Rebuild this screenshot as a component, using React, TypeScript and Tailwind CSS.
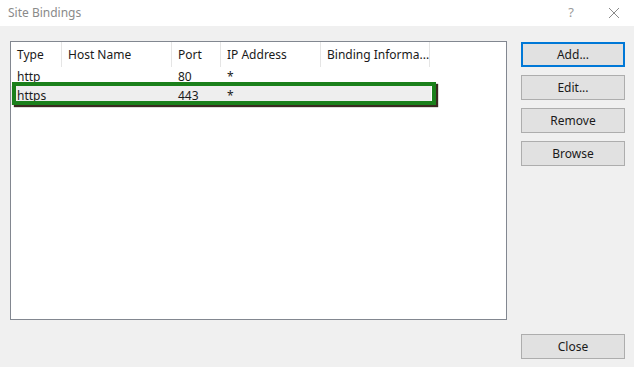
const font = "[font-family:'Noto_Sans','Open_Sans',sans-serif]";

const cols = [
  { label: "Type", w: "w-[51px]" },
  { label: "Host Name", w: "w-[110px]" },
  { label: "Port", w: "w-[49px]" },
  { label: "IP Address", w: "w-[100px]" },
  { label: "Binding Informa...", w: "w-[109px]" },
];

const rows = [
  ["http", "", "80", "*", ""],
  ["https", "", "443", "*", ""],
];

function Button({ label, focused }: { label: string; focused?: boolean }) {
  return (
    <button
      className={`h-[25px] w-[104px] bg-[#e1e1e1] text-[12px] text-[#1a1a1a] border ${
        focused ? "border-[#0078d7] shadow-[inset_0_0_0_1px_#0078d7]" : "border-[#adadad]"
      }`}
    >
      {label}
    </button>
  );
}

export default function App() {
  return (
    <div className={`w-[634px] h-[367px] bg-[#f0f0f0] flex flex-col ${font}`}>
      {/* Title bar */}
      <div className="h-[26px] bg-white flex items-center pl-[8px] text-[12px] text-[#8a8a8a]">
        <span className="flex-1">Site Bindings</span>
        <span className="w-[20px] text-center mr-[27px] text-[13px] text-[#9a9a9a]">?</span>
        <svg width="12" height="12" viewBox="0 0 12 12" className="mr-[14px]">
          <path d="M1 1 L11 11 M11 1 L1 11" stroke="#8a8a8a" strokeWidth="1" />
        </svg>
      </div>

      <div className="flex-1 flex pt-[15px] pl-[10px] pr-[9px] pb-[8px]">
        {/* List */}
        <div className="relative w-[497px] h-[279px] bg-white border border-[#828790]">
          <div className="flex h-[25px] text-[12px] text-[#1a1a1a]">
            {cols.map((c) => (
              <div key={c.label} className={`${c.w} flex items-center pl-[6px] border-r border-[#e5e5e5] whitespace-nowrap`}>
                {c.label}
              </div>
            ))}
          </div>
          {rows.map((r, i) => (
            <div key={i} className={`flex h-[19px] text-[12px] text-[#1a1a1a] ${i === 1 ? "bg-[#eeeeee] w-[420px]" : ""}`}>
              {r.map((cell, j) => (
                <div key={j} className={`${cols[j].w} pl-[6px] flex items-center leading-none`}>
                  {cell}
                </div>
              ))}
            </div>
          ))}
          {/* Highlight box */}
          <div className="absolute left-[1px] top-[40px] w-[424px] h-[23px] border-[4px] border-[#1b801b] shadow-[2px_2px_1px_#3a2a20]" />
        </div>

        {/* Buttons */}
        <div className="flex-1 flex flex-col items-end">
          <div className="flex flex-col gap-[8px] mt-[1px]">
            <Button label="Add..." focused />
            <Button label="Edit..." />
            <Button label="Remove" />
            <Button label="Browse" />
          </div>
          <div className="flex-1" />
          <Button label="Close" />
        </div>
      </div>
    </div>
  );
}
